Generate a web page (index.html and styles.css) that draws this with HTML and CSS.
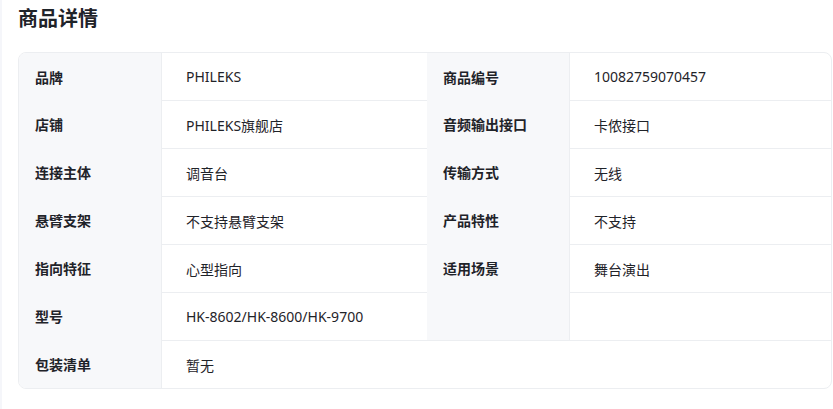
FILE: index.html
```html
<!DOCTYPE html>
<html lang="zh-CN">
<head>
<meta charset="utf-8">
<title>商品详情</title>
<link rel="stylesheet" href="styles.css">
</head>
<body>
<div class="page">
  <h2 class="title">商品详情</h2>
  <div class="desc">
    <div class="label">品牌</div>
    <div class="value first">PHILEKS</div>
    <div class="label">商品编号</div>
    <div class="value first">10082759070457</div>

    <div class="label">店铺</div>
    <div class="value">PHILEKS旗舰店</div>
    <div class="label">音频输出接口</div>
    <div class="value">卡侬接口</div>

    <div class="label">连接主体</div>
    <div class="value">调音台</div>
    <div class="label">传输方式</div>
    <div class="value">无线</div>

    <div class="label">悬臂支架</div>
    <div class="value">不支持悬臂支架</div>
    <div class="label">产品特性</div>
    <div class="value">不支持</div>

    <div class="label">指向特征</div>
    <div class="value">心型指向</div>
    <div class="label">适用场景</div>
    <div class="value">舞台演出</div>

    <div class="label">型号</div>
    <div class="value">HK-8602/HK-8600/HK-9700</div>
    <div class="label"></div>
    <div class="value"></div>

    <div class="label">包装清单</div>
    <div class="value wide">暂无</div>
  </div>
</div>
</body>
</html>
```

FILE: styles.css
```css
* { box-sizing: border-box; }
html, body {
  margin: 0;
  padding: 0;
  background: #ffffff;
}
body {
  font-family: "Noto Sans", "Noto Sans CJK SC", sans-serif;
  color: #1f2329;
  overflow: hidden;
}
.page {
  border-left: 2px solid #f5f6fa;
  padding: 5px 0 0 16px;
  min-height: 409px;
}
.title {
  margin: 0 0 19px 0;
  font-size: 20px;
  line-height: 28px;
  font-weight: 700;
  color: #1f2329;
}
.desc {
  width: 814px;
  border: 1px solid #eceef1;
  border-radius: 8px;
  overflow: hidden;
  display: grid;
  grid-template-columns: 143px 265px 143px 1fr;
}
.label {
  background: #f7f8fa;
  border-right: 1px solid #eceef1;
  padding: 0 16px;
  font-size: 14px;
  font-weight: 700;
  display: flex;
  align-items: center;
  min-height: 47px;
  color: #1f2329;
}
.value {
  border-top: 1px solid #eceef1;
  padding: 0 24px;
  font-size: 14px;
  display: flex;
  align-items: center;
  min-height: 48px;
  color: #1f2329;
}
.value.first {
  border-top: none;
  min-height: 47px;
}
.value.wide {
  grid-column: span 3;
}
```
